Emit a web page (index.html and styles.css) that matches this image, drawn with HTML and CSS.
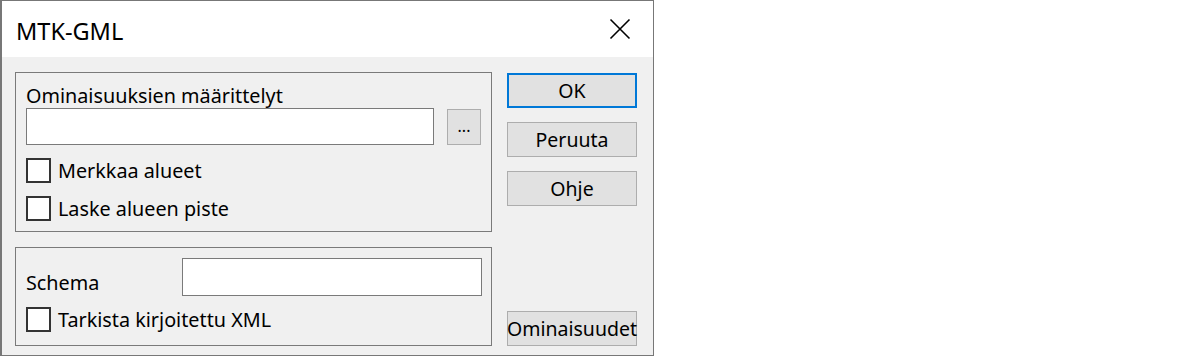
FILE: index.html
```html
<!DOCTYPE html>
<html lang="fi">
<head>
<meta charset="utf-8">
<title>MTK-GML</title>
<link rel="stylesheet" href="styles.css">
</head>
<body>
<div class="window">
  <div class="titlebar">
    <span class="title">MTK-GML</span>
    <span class="close">
      <svg width="22" height="22" viewBox="0 0 22 22"><path d="M1.5 1.5 L20.5 20.5 M20.5 1.5 L1.5 20.5" stroke="#000" stroke-width="1.6" fill="none"/></svg>
    </span>
  </div>
  <div class="content">
    <div class="left">
      <div class="group group1">
        <div class="label">Ominaisuuksien määrittelyt</div>
        <div class="row-input">
          <div class="input wide"></div>
          <div class="btn small">...</div>
        </div>
        <div class="check"><span class="box"></span><span>Merkkaa alueet</span></div>
        <div class="check"><span class="box"></span><span>Laske alueen piste</span></div>
      </div>
      <div class="group group2">
        <div class="schema-row">
          <span class="schema-label">Schema</span>
          <div class="input schema"></div>
        </div>
        <div class="check"><span class="box"></span><span>Tarkista kirjoitettu XML</span></div>
      </div>
    </div>
    <div class="right">
      <div class="btn default">OK</div>
      <div class="btn">Peruuta</div>
      <div class="btn">Ohje</div>
      <div class="spacer"></div>
      <div class="btn">Ominaisuudet</div>
    </div>
  </div>
</div>
</body>
</html>
```
FILE: styles.css
```css
html, body {
  margin: 0;
  padding: 0;
  background: #ffffff;
}
body {
  font-family: "Noto Sans", "Open Sans", sans-serif;
  font-size: 19.8px;
  color: #000;
}
.window {
  width: 654px;
  height: 356px;
  box-sizing: border-box;
  border: 1px solid #777777;
  border-left-width: 2px;
  background: #f0f0f0;
  display: flex;
  flex-direction: column;
}
.titlebar {
  height: 56px;
  background: #ffffff;
  display: flex;
  align-items: center;
  justify-content: space-between;
  padding: 0 22px 0 14px;
  flex-shrink: 0;
}
.title {
  font-size: 23.5px;
  line-height: 30px;
  margin-top: 4px;
}
.close {
  display: flex;
  width: 22px;
  height: 22px;
}
.content {
  flex: 1;
  display: flex;
  gap: 15px;
  padding: 15px 16px 11px 13px;
}
.left {
  width: 477px;
  display: flex;
  flex-direction: column;
  gap: 15px;
}
.group {
  border: 1px solid #7a7a7a;
  box-sizing: border-box;
  display: flex;
  flex-direction: column;
}
.group1 {
  height: 160px;
  padding: 11px 10px 0 10px;
}
.group2 {
  flex: 1;
  padding: 10px 9px 0 10px;
}
.label {
  line-height: 24px;
  height: 24px;
}
.row-input {
  display: flex;
  gap: 13px;
  align-items: flex-start;
  margin-bottom: 13px;
}
.input {
  background: #fff;
  border: 1px solid #7a7a7a;
  box-sizing: border-box;
}
.wide {
  width: 408px;
  height: 37px;
}
.btn {
  background: #e1e1e1;
  border: 1px solid #adadad;
  box-sizing: border-box;
  height: 35px;
  display: flex;
  align-items: center;
  justify-content: center;
  white-space: nowrap;
  line-height: 1;
  font-size: 19.5px;
}
.btn.small {
  width: 34px;
  height: 36px;
  margin-top: 1px;
  font-size: 16px;
  align-items: flex-end;
  padding-bottom: 10px;
}
.btn.default {
  border: 2px solid #0078d7;
}
.check {
  display: flex;
  align-items: center;
  gap: 7px;
  height: 25px;
  margin-bottom: 13px;
  line-height: 24px;
}
.box {
  width: 25px;
  height: 25px;
  box-sizing: border-box;
  border: 2px solid #333333;
  background: #fff;
  flex-shrink: 0;
}
.schema-row {
  display: flex;
  justify-content: space-between;
  align-items: flex-end;
  margin-bottom: 11px;
}
.schema-label {
  line-height: 24px;
  padding-bottom: 1px;
}
.schema {
  width: 300px;
  height: 38px;
}
.right {
  width: 130px;
  display: flex;
  flex-direction: column;
  gap: 14px;
  padding-top: 1px;
}
.spacer {
  flex: 1;
}
```
